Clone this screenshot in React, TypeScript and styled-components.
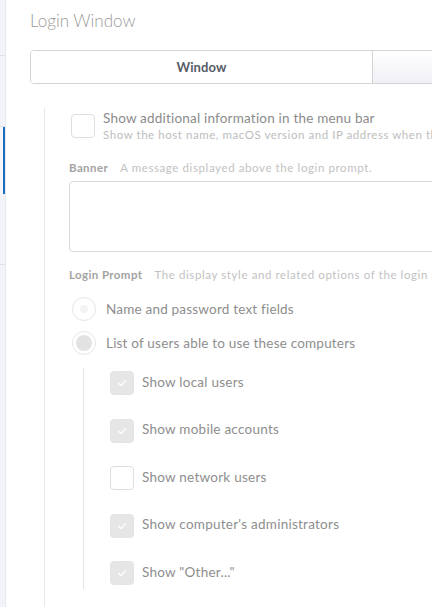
import { createGlobalStyle } from "styled-components";
import styled from "styled-components";

const GlobalStyle = createGlobalStyle`
  html, body {
    margin: 0;
    padding: 0;
    background: #ffffff;
  }
  body {
    font-family: Lato, "Noto Sans", sans-serif;
  }
`;

const subUsers = [
  { label: "Show local users", checked: true },
  { label: "Show mobile accounts", checked: true },
  { label: "Show network users", checked: false },
  { label: "Show computer's administrators", checked: true },
  { label: 'Show "Other..."', checked: true },
];

const Check = () => (
  <svg width="12" height="12" viewBox="0 0 12 12">
    <path d="M2.5 6.3 L5 8.6 L9.6 3.6" fill="none" stroke="#ffffff" strokeWidth="1.3" strokeLinecap="round" strokeLinejoin="round" />
  </svg>
);

const App = () => {
  return (
    <>
      <GlobalStyle />
      <Page>
        <Sidebar>
          <SideItem $h={55} />
          <SideItem $h={70} />
          <SideItem $h={67} $active />
          <SideItem $h={70} />
          <SideItem $h={0} $last />
        </Sidebar>
        <Main>
          <Title>Login Window</Title>
          <Segmented>
            <Segment $active>Window</Segment>
            <Segment />
          </Segmented>
          <Section>
            <OptionRow>
              <CheckBox $checked={false} />
              <OptionText>
                <OptionTitle>Show additional information in the menu bar</OptionTitle>
                <OptionHint>
                  Show the host name, macOS version and IP address when th
                </OptionHint>
              </OptionText>
            </OptionRow>

            <FieldLabel $top={19}>
              <strong>Banner</strong>
              <span>A message displayed above the login prompt.</span>
            </FieldLabel>
            <TextBox />

            <FieldLabel $top={16}>
              <strong>Login Prompt</strong>
              <span>The display style and related options of the login p</span>
            </FieldLabel>
            <RadioRow $top={15}>
              <Radio />
              <RadioText>Name and password text fields</RadioText>
            </RadioRow>
            <RadioRow $top={10}>
              <Radio $selected />
              <RadioText>List of users able to use these computers</RadioText>
            </RadioRow>

            <SubGroup>
              {subUsers.map((u) => (
                <SubRow key={u.label}>
                  <CheckBox $checked={u.checked}>{u.checked && <Check />}</CheckBox>
                  <SubText>{u.label}</SubText>
                </SubRow>
              ))}
            </SubGroup>
          </Section>
        </Main>
      </Page>
    </>
  );
};

export default App;

const Page = styled.div`
  display: flex;
  width: 432px;
  height: 607px;
  overflow: hidden;
`;

const Sidebar = styled.div`
  width: 5px;
  flex-shrink: 0;
  display: flex;
  flex-direction: column;
  background: #f3f4f9;
  border-right: 1px solid #e9eaef;
`;

const SideItem = styled.div<{ $h: number; $active?: boolean; $last?: boolean }>`
  height: ${(p) => p.$h}px;
  flex: ${(p) => (p.$last ? 1 : "none")};
  border-bottom: ${(p) => (p.$last || p.$active ? "none" : "1px solid #dfe0e5")};
  box-shadow: ${(p) => (p.$active ? "inset -2px 0 0 #1c6fbf" : "none")};
  background: ${(p) => (p.$active ? "#f6f7fb" : "transparent")};
`;

const Main = styled.div`
  flex: 1;
  min-width: 0;
  padding-left: 24px;
  display: flex;
  flex-direction: column;
`;

const Title = styled.h1`
  margin: 10px 0 0;
  font-size: 17px;
  font-weight: 300;
  color: #9b9b9b;
  line-height: 22px;
  white-space: nowrap;
`;

const Segmented = styled.div`
  margin-top: 18px;
  display: flex;
  width: 700px;
  height: 34px;
  border: 1px solid #d4d4d4;
  border-radius: 4px;
  overflow: hidden;
  box-sizing: border-box;
`;

const Segment = styled.div<{ $active?: boolean }>`
  width: ${(p) => (p.$active ? "341px" : "auto")};
  flex: ${(p) => (p.$active ? "none" : 1)};
  display: flex;
  align-items: center;
  justify-content: center;
  font-size: 13px;
  font-weight: 700;
  letter-spacing: 0.1px;
  color: #575c66;
  background: ${(p) =>
    p.$active ? "#ffffff" : "linear-gradient(#ffffff, #eff0f6)"};
  border-right: ${(p) => (p.$active ? "1px solid #d4d4d4" : "none")};
`;

const Section = styled.div`
  margin: 24px 0 0 14px;
  flex: 1;
  border-left: 1px solid #e8e8e8;
  padding-left: 24px;
  display: flex;
  flex-direction: column;
`;

const OptionRow = styled.div`
  display: flex;
  align-items: flex-start;
  gap: 8px;
  margin-top: 6px;
  margin-left: 2px;
`;

const CheckBox = styled.div<{ $checked: boolean }>`
  width: 24px;
  height: 24px;
  flex-shrink: 0;
  box-sizing: border-box;
  border-radius: 4px;
  border: 1px solid ${(p) => (p.$checked ? "#e4e4e4" : "#dedede")};
  background: ${(p) => (p.$checked ? "#e6e6e6" : "#ffffff")};
  display: flex;
  align-items: center;
  justify-content: center;
`;

const OptionText = styled.div`
  display: flex;
  flex-direction: column;
  white-space: nowrap;
  margin-top: -5px;
`;

const OptionTitle = styled.div`
  font-size: 13.5px;
  letter-spacing: 0.2px;
  color: #8c8c8c;
  line-height: 18px;
`;

const OptionHint = styled.div`
  font-size: 11.5px;
  letter-spacing: 0.55px;
  color: #bdbdbd;
  line-height: 15px;
`;

const FieldLabel = styled.div<{ $top: number }>`
  margin-top: ${(p) => p.$top}px;
  font-size: 11.5px;
  line-height: 14px;
  white-space: nowrap;
  display: flex;
  gap: 12px;
  strong {
    font-weight: 700;
    color: #a3a3a3;
    letter-spacing: 0.4px;
  }
  span {
    color: #c2c2c2;
    letter-spacing: 0.6px;
  }
`;

const TextBox = styled.div`
  margin-top: 6px;
  height: 71px;
  width: 600px;
  box-sizing: border-box;
  border: 1px solid #d9d9d9;
  border-radius: 4px;
`;

const RadioRow = styled.div<{ $top: number }>`
  margin-top: ${(p) => p.$top}px;
  margin-left: 3px;
  display: flex;
  align-items: center;
  gap: 10px;
`;

const Radio = styled.div<{ $selected?: boolean }>`
  width: 24px;
  height: 24px;
  box-sizing: border-box;
  border-radius: 50%;
  border: 1px solid #e6e6e6;
  background: #ffffff;
  display: flex;
  align-items: center;
  justify-content: center;
  &::after {
    content: "";
    width: ${(p) => (p.$selected ? 16 : 8)}px;
    height: ${(p) => (p.$selected ? 16 : 8)}px;
    border-radius: 50%;
    background: ${(p) => (p.$selected ? "#e2e2e2" : "#f4f4f4")};
  }
`;

const RadioText = styled.div`
  font-size: 13.5px;
  letter-spacing: 0.2px;
  color: #8e8e8e;
  white-space: nowrap;
  margin-top: -1px;
`;

const SubGroup = styled.div`
  margin: 13px 0 0 14px;
  border-left: 1px solid #e4e4e4;
  padding: 3px 0 4px 26px;
  display: flex;
  flex-direction: column;
  gap: 23.5px;
`;

const SubRow = styled.div`
  display: flex;
  align-items: center;
  gap: 8px;
`;

const SubText = styled.div`
  font-size: 13.5px;
  letter-spacing: 0.25px;
  color: #8e8e8e;
  white-space: nowrap;
  margin-top: -3px;
`;
